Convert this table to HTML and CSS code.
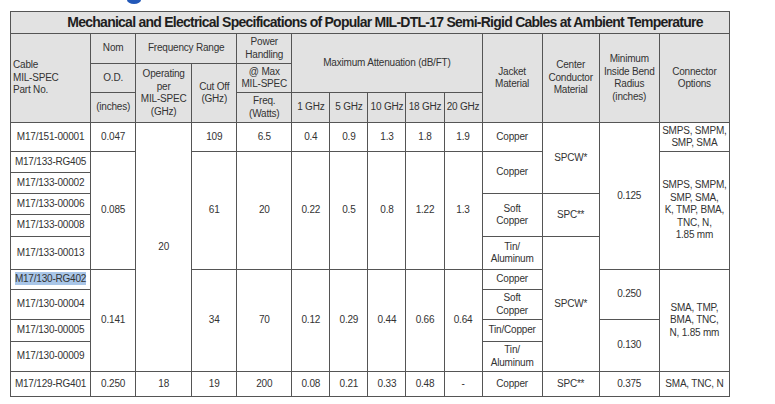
FILE: index.html
```html
<!DOCTYPE html>
<html>
<head>
<meta charset="utf-8">
<link rel="stylesheet" href="styles.css">
</head>
<body>
<div class="top"><span class="dot"></span></div>
<table class="spec">
  <colgroup>
    <col class="c-cable"><col class="c-nom"><col class="c-op"><col class="c-cut"><col class="c-pow">
    <col class="c-att"><col class="c-att"><col class="c-att"><col class="c-att"><col class="c-att">
    <col class="c-jac"><col class="c-cen"><col class="c-bend"><col class="c-con">
  </colgroup>
  <thead>
    <tr class="title"><th colspan="14">Mechanical and Electrical Specifications of Popular MIL-DTL-17 Semi-Rigid Cables at Ambient Temperature</th></tr>
    <tr class="h1">
      <th rowspan="3" class="cable">Cable<br>MIL-SPEC<br>Part No.</th>
      <th>Nom</th>
      <th colspan="2">Frequency Range</th>
      <th>Power<br>Handling</th>
      <th colspan="5" rowspan="2">Maximum Attenuation (dB/FT)</th>
      <th rowspan="3">Jacket<br>Material</th>
      <th rowspan="3">Center<br>Conductor<br>Material</th>
      <th rowspan="3">Minimum<br>Inside Bend<br>Radius<br>(inches)</th>
      <th rowspan="3">Connector<br>Options</th>
    </tr>
    <tr class="h2">
      <th>O.D.</th>
      <th rowspan="2">Operating<br>per<br>MIL-SPEC<br>(GHz)</th>
      <th rowspan="2">Cut Off<br>(GHz)</th>
      <th>@ Max<br>MIL-SPEC</th>
    </tr>
    <tr class="h3">
      <th>(inches)</th>
      <th>Freq.<br>(Watts)</th>
      <th>1 GHz</th><th>5 GHz</th><th>10 GHz</th><th>18 GHz</th><th>20 GHz</th>
    </tr>
  </thead>
  <tbody>
    <tr class="r1">
      <td>M17/151-00001</td><td>0.047</td><td rowspan="10">20</td><td>109</td><td>6.5</td>
      <td>0.4</td><td>0.9</td><td>1.3</td><td>1.8</td><td>1.9</td>
      <td>Copper</td><td rowspan="3">SPCW*</td><td rowspan="6">0.125</td><td>SMPS, SMPM,<br>SMP, SMA</td>
    </tr>
    <tr class="r2">
      <td>M17/133-RG405</td><td rowspan="5">0.085</td><td rowspan="5">61</td><td rowspan="5">20</td>
      <td rowspan="5">0.22</td><td rowspan="5">0.5</td><td rowspan="5">0.8</td><td rowspan="5">1.22</td><td rowspan="5">1.3</td>
      <td rowspan="2">Copper</td><td rowspan="5">SMPS, SMPM,<br>SMP, SMA,<br>K, TMP, BMA,<br>TNC, N,<br>1.85 mm</td>
    </tr>
    <tr class="r3"><td>M17/133-00002</td></tr>
    <tr class="r4"><td>M17/133-00006</td><td rowspan="2">Soft<br>Copper</td><td rowspan="2">SPC**</td></tr>
    <tr class="r5"><td>M17/133-00008</td></tr>
    <tr class="r6"><td>M17/133-00013</td><td>Tin/<br>Aluminum</td><td rowspan="5">SPCW*</td></tr>
    <tr class="r7">
      <td><span class="sel">M17/130-RG402</span></td><td rowspan="4">0.141</td><td rowspan="4">34</td><td rowspan="4">70</td>
      <td rowspan="4">0.12</td><td rowspan="4">0.29</td><td rowspan="4">0.44</td><td rowspan="4">0.66</td><td rowspan="4">0.64</td>
      <td>Copper</td><td rowspan="2">0.250</td><td rowspan="4">SMA, TMP,<br>BMA, TNC,<br>N, 1.85 mm</td>
    </tr>
    <tr class="r8"><td>M17/130-00004</td><td>Soft<br>Copper</td></tr>
    <tr class="r9"><td>M17/130-00005</td><td>Tin/Copper</td><td rowspan="2">0.130</td></tr>
    <tr class="r10"><td>M17/130-00009</td><td>Tin/<br>Aluminum</td></tr>
    <tr class="r11">
      <td>M17/129-RG401</td><td>0.250</td><td>18</td><td>19</td><td>200</td>
      <td>0.08</td><td>0.21</td><td>0.33</td><td>0.48</td><td>-</td>
      <td>Copper</td><td>SPC**</td><td>0.375</td><td>SMA, TNC, N</td>
    </tr>
  </tbody>
</table>
</body>
</html>
```
FILE: styles.css
```css
html, body {
  margin: 0;
  padding: 0;
  background: #ffffff;
}
body {
  padding-left: 10px;
  font-family: "Liberation Sans", Arial, sans-serif;
  color: #2a2a2a;
  overflow: hidden;
}
.top {
  height: 11px;
}
.dot {
  display: block;
  width: 14px;
  height: 4px;
  border-radius: 0 0 50% 50% / 0 0 100% 100%;
  background: #2258b8;
  margin-left: 117px;
}
.spec {
  border-collapse: collapse;
  table-layout: fixed;
  width: 720px;
  font-size: 10px;
  line-height: 12.5px;
  letter-spacing: -0.2px;
}
.spec th, .spec td {
  border: 1px solid #555;
  padding: 0;
  text-align: center;
  vertical-align: middle;
  font-weight: normal;
}
.spec thead th {
  background: #e2e2e2;
  color: #333;
}
.spec td {
  background: #fff;
  color: #333;
}
.c-cable { width: 80px; }
.c-nom { width: 45px; }
.c-op { width: 56px; }
.c-cut { width: 45px; }
.c-pow { width: 55px; }
.c-att { width: 38px; }
.c-jac { width: 60px; }
.c-cen { width: 57px; }
.c-bend { width: 60px; }
.c-con { width: 70px; }

.spec .title th {
  height: 21px;
  padding-left: 30px;
  font-weight: bold;
  font-size: 14px;
  color: #1e1e1e;
  letter-spacing: -0.75px;
}
.spec .cable {
  text-align: left;
  padding-left: 2px;
}
.h1 th { height: 29px; }
.h2 th { height: 28px; }
.h3 th { height: 29px; }
.r1 td { height: 28px; }
.r2 td { height: 20px; }
.r3 td { height: 20px; }
.r4 td { height: 20px; }
.r5 td { height: 21px; }
.r6 td { height: 32px; }
.r7 td { height: 19px; }
.r8 td { height: 29px; }
.r9 td { height: 21px; }
.r10 td { height: 29px; }
.r11 td { height: 24px; }
.sel {
  background: #a9c6e8;
  padding: 1px 0;
}
```
